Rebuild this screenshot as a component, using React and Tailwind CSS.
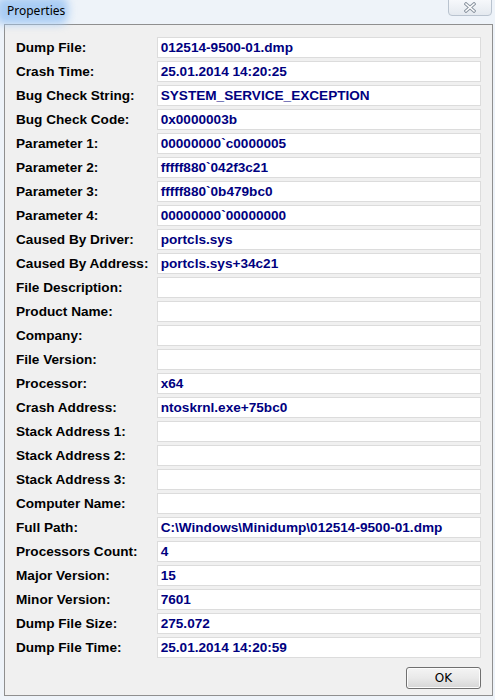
import React from "react";

const rows = [
  ["Dump File:", "012514-9500-01.dmp"],
  ["Crash Time:", "25.01.2014 14:20:25"],
  ["Bug Check String:", "SYSTEM_SERVICE_EXCEPTION"],
  ["Bug Check Code:", "0x0000003b"],
  ["Parameter 1:", "00000000`c0000005"],
  ["Parameter 2:", "fffff880`042f3c21"],
  ["Parameter 3:", "fffff880`0b479bc0"],
  ["Parameter 4:", "00000000`00000000"],
  ["Caused By Driver:", "portcls.sys"],
  ["Caused By Address:", "portcls.sys+34c21"],
  ["File Description:", ""],
  ["Product Name:", ""],
  ["Company:", ""],
  ["File Version:", ""],
  ["Processor:", "x64"],
  ["Crash Address:", "ntoskrnl.exe+75bc0"],
  ["Stack Address 1:", ""],
  ["Stack Address 2:", ""],
  ["Stack Address 3:", ""],
  ["Computer Name:", ""],
  ["Full Path:", "C:\\Windows\\Minidump\\012514-9500-01.dmp"],
  ["Processors Count:", "4"],
  ["Major Version:", "15"],
  ["Minor Version:", "7601"],
  ["Dump File Size:", "275.072"],
  ["Dump File Time:", "25.01.2014 14:20:59"],
];

export default function App() {
  return (
    <div className="w-[495px] h-[700px] bg-[#eef3f9] flex flex-col overflow-hidden">
      {/* Title bar */}
      <div className="relative h-[24px] shrink-0 flex items-start">
        <div className="absolute left-[-4px] top-[-3px] w-[72px] h-[27px] rounded-[8px] bg-[#a8ccf4] blur-[4px]" />
        <span className="relative pl-[7px] pt-[3px] text-[12px] leading-[16px] text-black [font-family:'Noto_Sans','Open_Sans',sans-serif]">
          Properties
        </span>
        <div className="absolute left-[448px] top-[-1px] w-[44px] h-[17px] rounded-b-[4px] border border-[#b9c3cf] bg-gradient-to-b from-[#f6f8fb] to-[#e4e9ef] flex items-center justify-center">
          <svg width="12" height="11" viewBox="0 0 12 11">
            <path d="M2 2 L10 9 M10 2 L2 9" stroke="#8a94a0" strokeWidth="3.4" strokeLinecap="square" fill="none" />
            <path d="M2 2 L10 9 M10 2 L2 9" stroke="#ffffff" strokeWidth="1.5" strokeLinecap="square" fill="none" />
          </svg>
        </div>
      </div>
      {/* Panel */}
      <div className="ml-[4px] w-[489px] h-[672px] border border-[#8f8f8f] bg-[#f0f0f0] flex flex-col pt-[12px] pl-[11px] pr-[11px] [font-family:'Liberation_Sans',Arial,sans-serif]">
        <div className="flex flex-col gap-[3px]">
          {rows.map(([label, value]) => (
            <div key={label} className="flex items-center h-[21px]">
              <div className="w-[141px] text-[13.6px] font-bold text-black leading-[16px] whitespace-nowrap">
                {label}
              </div>
              <div className="w-[325px] h-[21px] bg-white border border-[#dcdcdc] flex items-center pl-[3px] text-[13.6px] font-bold text-[#000080] leading-[16px] whitespace-nowrap overflow-hidden">
                {value}
              </div>
            </div>
          ))}
        </div>
        <div className="flex justify-end mt-[9px]">
          <button className="w-[75px] h-[22px] rounded-[3px] border border-[#707070] bg-gradient-to-b from-[#f4f4f4] via-[#e9e9e9] to-[#d6d6d6] text-[12px] text-black leading-[14px] [font-family:'DejaVu_Sans',sans-serif] shadow-[inset_0_0_0_1px_#fcfcfc]">
            OK
          </button>
        </div>
      </div>
    </div>
  );
}
